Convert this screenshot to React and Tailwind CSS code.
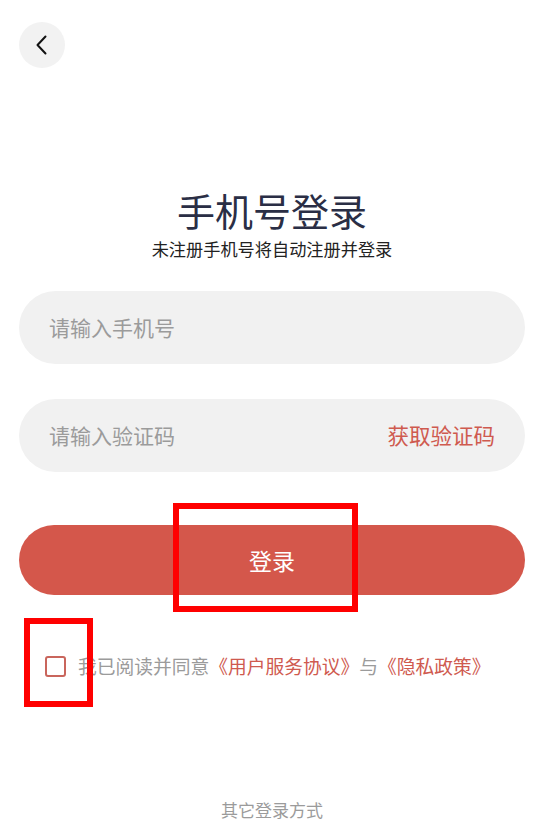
import React from "react";

export default function App() {
  return (
    <div
      className="relative w-[535px] h-[839px] bg-white overflow-hidden"
      style={{ fontFamily: '"Noto Sans CJK SC", "Noto Sans", sans-serif' }}
    >
      <div className="flex flex-col pl-[19px] pr-[10px]">
        <div className="pt-[22px]">
          <button className="w-[46px] h-[46px] rounded-full bg-[#f2f2f2] flex items-center justify-center">
            <svg width="24" height="24" viewBox="0 0 24 24" fill="none">
              <path d="M15.5 3.5 L7.5 12 L15.5 20.5" stroke="#111" strokeWidth="2" strokeLinecap="round" strokeLinejoin="round" />
            </svg>
          </button>
        </div>
        <h1 className="mt-[119px] text-center text-[38px] leading-[46px] text-[#2a2e45] font-normal">手机号登录</h1>
        <p className="mt-[6px] text-center text-[17.2px] leading-[20px] text-[#222]">未注册手机号将自动注册并登录</p>

        <div className="mt-[32px] h-[73px] rounded-full bg-[#f1f1f1] flex items-center px-[30px]">
          <span className="text-[21px] text-[#9b9b9b]">请输入手机号</span>
        </div>
        <div className="mt-[35px] h-[73px] rounded-full bg-[#f1f1f1] flex items-center justify-between pl-[30px] pr-[30px]">
          <span className="text-[21px] text-[#9b9b9b]">请输入验证码</span>
          <span className="text-[21.5px] text-[#cf5a4f]">获取验证码</span>
        </div>

        <button className="mt-[53px] h-[70px] rounded-full bg-[#d4574b] flex items-center justify-center">
          <span className="text-[23px] text-white">登录</span>
        </button>

        <div className="mt-[59px] flex items-center pl-[26px] h-[24px]">
          <span className="w-[21px] h-[21px] border-2 border-[#c9655c] rounded-[3px]" />
          <span className="ml-[12px] text-[18.75px] leading-[24px] text-[#9b9b9b]">
            我已阅读并同意<span className="text-[#cf5a4f]">《用户服务协议》</span>与<span className="text-[#cf5a4f]">《隐私政策》</span>
          </span>
        </div>

        <p className="mt-[120px] text-center text-[17px] leading-[24px] text-[#9b9b9b]">其它登录方式</p>
      </div>

      <div className="absolute left-[173px] top-[503px] w-[185px] h-[109px] border-[6px] border-[#ff0000]" />
      <div className="absolute left-[24px] top-[618px] w-[69px] h-[89px] border-[6px] border-[#ff0000]" />
    </div>
  );
}
